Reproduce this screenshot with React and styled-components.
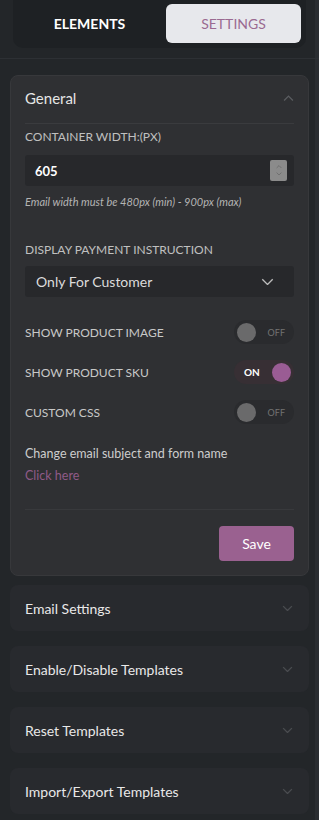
import React, { useState } from "react";
import styled, { createGlobalStyle } from "styled-components";

const GlobalStyle = createGlobalStyle`
    body{
        margin:0;
        background:#232629;
        font-family:Lato, "Open Sans", sans-serif;
    }
`;

const Page = styled.div`
    width:319px;
    min-height:820px;
    box-sizing:border-box;
    box-shadow:inset -4px 0 0 #2a2d31;
`;

const TabBar = styled.div`
    margin:0 13px;
    height:48px;
    box-sizing:border-box;
    padding:4px 5px 5px 0;
    display:grid;
    grid-template-columns:1fr 135px;
    background:#1e2124;
    border-radius:0 0 10px 10px;
`;

const Tab = styled.div`
    display:flex;
    align-items:center;
    justify-content:center;
    border-radius:6px;
    font-size:14px;
    text-transform:uppercase;
    background:${({active}) => active ? "#e7e8ec" : "transparent"};
    color:${({active}) => active ? "#9a6a91" : "#ffffff"};
    font-weight:${({active}) => active ? 400 : 700};
`;

const Divider = styled.div`
    height:1px;
    margin-top:10px;
    background:#2d3034;
`;

const Content = styled.div`
    padding:16px 10px 0 10px;
    display:flex;
    flex-direction:column;
    gap:15px;
`;

const Panel = styled.div`
    background:#2f3033;
    border:1px solid #37383b;
    border-radius:8px;
    margin-bottom:-6px;
`;

const PanelHeader = styled.div`
    height:48px;
    box-sizing:border-box;
    padding-top:13px;
    margin:0 14px;
    display:flex;
    align-items:flex-start;
    justify-content:space-between;
    border-bottom:1px solid #3a3b3e;
    font-size:15px;
    line-height:18px;
    color:#e6e6e6;

    svg{
        margin-top:6px;
    }
`;

const PanelBody = styled.div`
    padding:0 14px 14px;
`;

const Label = styled.div`
    font-size:12px;
    line-height:14px;
    color:#c0c0c0;
    text-transform:uppercase;
    margin-top:${({top}) => top || 0}px;
`;

const Field = styled.div`
    height:31px;
    margin-top:${({top}) => top}px;
    display:flex;
    align-items:center;
    justify-content:space-between;
    padding:0 7px 0 ${({pad}) => pad || 10}px;
    background:#27282b;
    border-radius:3px;
    color:${({bold}) => bold ? "#ffffff" : "#dcdcdc"};
    font-size:${({bold}) => bold ? 13 : 14}px;
    font-weight:${({bold}) => bold ? 700 : 400};
`;

const Spinner = styled.div`
    width:17px;
    height:21px;
    background:#8b8b8b;
    border-radius:2px;
    display:flex;
    flex-direction:column;
    align-items:center;
    justify-content:center;
    gap:3px;
`;

const SelectArrow = styled.span`
    display:flex;
    margin-right:13px;
`;

const Help = styled.div`
    margin-top:9px;
    font-size:11px;
    line-height:13px;
    font-style:italic;
    color:#b4b4b4;
`;

const ToggleList = styled.div`
    margin-top:23px;
    display:flex;
    flex-direction:column;
    gap:16px;
`;

const ToggleRow = styled.div`
    display:flex;
    align-items:center;
    justify-content:space-between;
    font-size:12px;
    color:#c8c8c8;
`;

const Switch = styled.div`
    width:60px;
    height:24px;
    box-sizing:border-box;
    border-radius:12px;
    display:flex;
    align-items:center;
    justify-content:space-between;
    flex-direction:${({on}) => on ? "row-reverse" : "row"};
    padding:${({on}) => on ? "0 3px 0 10px" : "0 9px 0 3px"};
    background:${({on}) => on ? "#372f34" : "#2a2b2e"};
`;

const Knob = styled.div`
    width:19px;
    height:19px;
    border-radius:50%;
    background:${({on}) => on ? "#9a5c94" : "#6a6a6b"};
`;

const SwitchText = styled.span`
    font-size:${({on}) => on ? 10 : 9}px;
    font-weight:${({on}) => on ? 700 : 400};
    color:${({on}) => on ? "#ffffff" : "#737373"};
`;

const Note = styled.div`
    margin-top:22px;
    font-size:12.5px;
    line-height:15px;
    color:#cdcdcd;
`;

const Link = styled.a`
    display:block;
    margin-top:7px;
    font-size:12.5px;
    line-height:15px;
    color:#8f5a88;
    text-decoration:none;
`;

const FooterRow = styled.div`
    margin-top:26px;
    padding-top:16px;
    border-top:1px solid #38393c;
    display:flex;
    justify-content:flex-end;
`;

const SaveButton = styled.button`
    width:75px;
    height:35px;
    border:none;
    border-radius:4px;
    background:#9a6190;
    color:#ffffff;
    font-family:inherit;
    font-size:14px;
`;

const Item = styled.div`
    height:46px;
    box-sizing:border-box;
    padding:0 16px 0 15px;
    display:flex;
    align-items:center;
    justify-content:space-between;
    background:#282a2e;
    border-radius:8px;
    font-size:14px;
    color:#e8e8e8;
`;

function Chevron({up, size = 10, color = "#55575b", width = 1.2}) {
    return (
        <svg width={size} height={size * 0.6} viewBox="0 0 10 6">
            <polyline
                points={up ? "1,5 5,1 9,5" : "1,1 5,5 9,1"}
                fill="none"
                stroke={color}
                strokeWidth={width}
            />
        </svg>
    );
}

const toggles = [
    {label:"Show Product Image", on:false},
    {label:"Show Product SKU", on:true},
    {label:"Custom CSS", on:false}
];

const sections = ["Email Settings", "Enable/Disable Templates", "Reset Templates", "Import/Export Templates"];

export default function App() {
    const [tab] = useState("settings");

    return (
        <>
        <GlobalStyle/>
        <Page>
            <TabBar>
                <Tab active={tab === "elements"}>Elements</Tab>
                <Tab active={tab === "settings"}>Settings</Tab>
            </TabBar>
            <Divider/>
            <Content>
                <Panel>
                    <PanelHeader>
                        General
                        <Chevron up size={11} color="#5a5c60"/>
                    </PanelHeader>
                    <PanelBody>
                        <Label top={6}>Container Width:(px)</Label>
                        <Field bold top={11}>
                            605
                            <Spinner>
                                <Chevron up size={6} color="#6c6c6c" width={1.4}/>
                                <Chevron size={6} color="#6c6c6c" width={1.4}/>
                            </Spinner>
                        </Field>
                        <Help>Email width must be 480px (min) - 900px (max)</Help>
                        <Label top={35}>Display Payment Instruction</Label>
                        <Field pad={11} top={9}>
                            Only For Customer
                            <SelectArrow>
                                <Chevron size={13} color="#bdbdbd" width={1}/>
                            </SelectArrow>
                        </Field>
                        <ToggleList>
                            {toggles.map(t => (
                                <ToggleRow key={t.label}>
                                    {t.label.toUpperCase()}
                                    <Switch on={t.on}>
                                        <Knob on={t.on}/>
                                        <SwitchText on={t.on}>{t.on ? "ON" : "OFF"}</SwitchText>
                                    </Switch>
                                </ToggleRow>
                            ))}
                        </ToggleList>
                        <Note>Change email subject and form name</Note>
                        <Link href="#">Click here</Link>
                        <FooterRow>
                            <SaveButton>Save</SaveButton>
                        </FooterRow>
                    </PanelBody>
                </Panel>
                {sections.map(s => (
                    <Item key={s}>
                        {s}
                        <Chevron size={11} color="#4a4c50"/>
                    </Item>
                ))}
            </Content>
        </Page>
        </>
    );
}
